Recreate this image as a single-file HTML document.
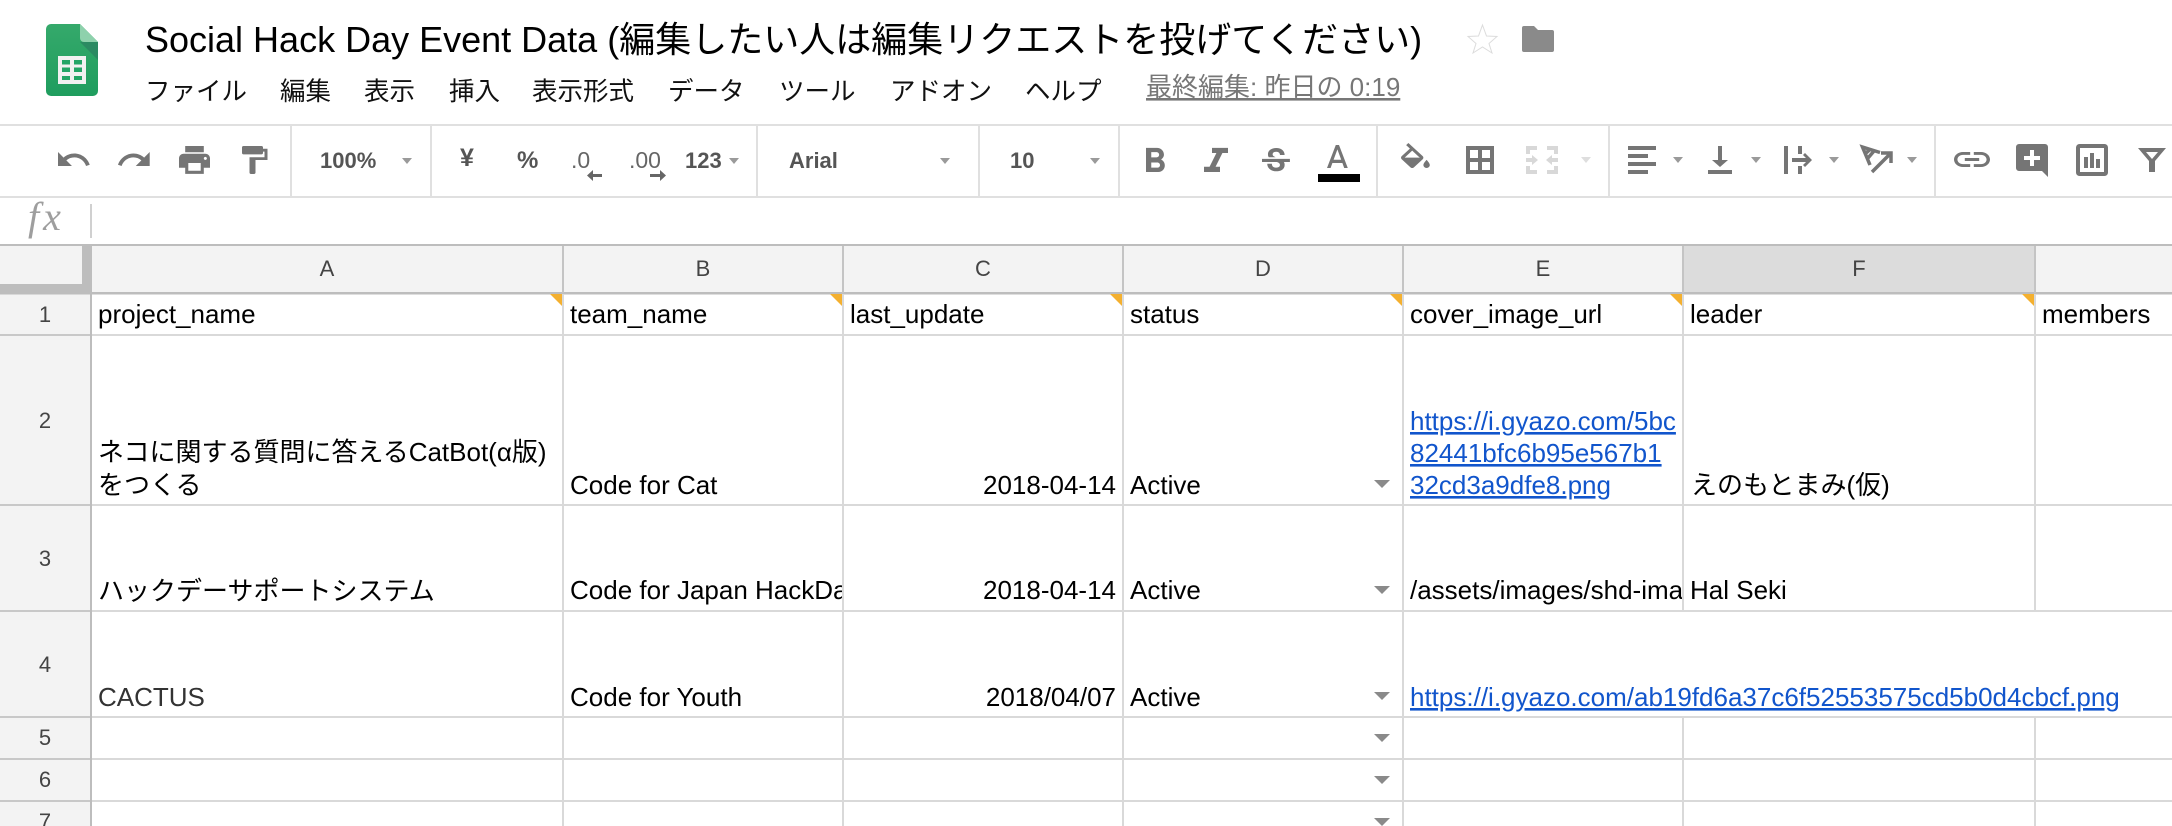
<!DOCTYPE html>
<html lang="ja"><head><meta charset="utf-8"><title>Social Hack Day Event Data</title>
<style>
html,body{margin:0;padding:0;background:#fff;width:2172px;height:826px;overflow:hidden}
svg{display:block}
text{font-family:"Liberation Sans","Noto Sans CJK JP",sans-serif;white-space:pre}
.c{font-size:26px;fill:#000}
.h{font-size:22px;fill:#444;text-anchor:middle}
.m{font-size:25.5px;fill:#111}
.t{font-size:22px;font-weight:700;fill:#555}
.l{font-size:26px;fill:#1155cc;text-decoration:underline}
.i{fill:#757575}
</style></head><body>
<svg xmlns="http://www.w3.org/2000/svg" width="2172" height="826" viewBox="0 0 2172 826">
<defs>
<clipPath id="cb"><rect x="564" y="506" width="278" height="105"/></clipPath>
<clipPath id="ce"><rect x="1404" y="506" width="278" height="105"/></clipPath>
<linearGradient id="lg" x1="0" y1="0" x2="0" y2="1"><stop offset="0" stop-color="#35a96b"/><stop offset="1" stop-color="#1f9d5e"/></linearGradient>
</defs>
<rect width="2172" height="826" fill="#fff"/>

<!-- logo -->
<path d="M51 24H80L98 42V91a5 5 0 0 1-5 5H51a5 5 0 0 1-5-5V29a5 5 0 0 1 5-5z" fill="url(#lg)"/>
<path d="M80 42L98 60V42z" fill="#2b8a62"/>
<path d="M80 24L98 42H84a4 4 0 0 1-4-4z" fill="#8ed1ac"/>
<rect x="58" y="56" width="28" height="28" fill="#f1f1f1"/>
<g fill="#23a566"><rect x="62" y="60" width="8" height="4.5"/><rect x="74" y="60" width="8" height="4.5"/><rect x="62" y="67.5" width="8" height="4.5"/><rect x="74" y="67.5" width="8" height="4.5"/><rect x="62" y="76" width="8" height="4"/><rect x="74" y="76" width="8" height="4"/></g>

<!-- title -->
<text x="145" y="52" font-size="36" fill="#000">Social Hack Day Event Data (編集したい人は編集リクエストを投げてください)</text>
<polygon points="1482.5,25 1486.5,36 1497,36.500 1489,43.500 1492,53 1482.500,47 1473,53 1476,43.500 1468,36.500 1478.500,36" fill="#fff" stroke="#dcdcdc" stroke-width="1"/>
<path d="M1522 28a2 2 0 0 1 2-2h10l4 4h14a2 2 0 0 1 2 2v18a2 2 0 0 1-2 2h-28a2 2 0 0 1-2-2z" fill="#8a8a8a"/>

<!-- menu -->
<text class="m" x="145" y="100">ファイル</text>
<text class="m" x="280" y="100">編集</text>
<text class="m" x="364" y="100">表示</text>
<text class="m" x="449" y="100">挿入</text>
<text class="m" x="532" y="100">表示形式</text>
<text class="m" x="668" y="100">データ</text>
<text class="m" x="779" y="100">ツール</text>
<text class="m" x="890" y="100">アドオン</text>
<text class="m" x="1025" y="100">ヘルプ</text>
<text x="1146" y="96" font-size="26" fill="#777" text-decoration="underline">最終編集: 昨日の 0:19</text>

<!-- toolbar frame -->
<rect x="0" y="124" width="2172" height="2" fill="#e0e0e0"/>
<rect x="0" y="196" width="2172" height="2" fill="#e0e0e0"/>
<g fill="#e0e0e0"><rect x="290" y="126" width="2" height="70"/><rect x="430" y="126" width="2" height="70"/><rect x="756" y="126" width="2" height="70"/><rect x="978" y="126" width="2" height="70"/><rect x="1118" y="126" width="2" height="70"/><rect x="1376" y="126" width="2" height="70"/><rect x="1608" y="126" width="2" height="70"/><rect x="1934" y="126" width="2" height="70"/></g>

<!-- undo / redo / print / paint -->
<path class="i" transform="translate(54.900 141.150) scale(1.550)" d="M12.5 8c-2.65 0-5.05.99-6.9 2.6L2 7v9h9l-3.62-3.62c1.39-1.16 3.16-1.88 5.12-1.88 3.54 0 6.55 2.31 7.6 5.5l2.37-.78C21.08 11.03 17.15 8 12.5 8z"/>
<path class="i" transform="translate(115.600 141.150) scale(1.550)" d="M18.4 10.6C16.55 8.99 14.15 8 11.5 8c-4.65 0-8.58 3.03-9.96 7.22L3.9 16c1.05-3.19 4.05-5.5 7.6-5.5 1.95 0 3.73.72 5.12 1.88L13 16h9V7l-3.6 3.6z"/>
<path class="i" transform="translate(175.900 141.350) scale(1.550)" d="M19 8H5c-1.66 0-3 1.34-3 3v6h4v4h12v-4h4v-6c0-1.66-1.34-3-3-3zm-3 11H8v-5h8v5zm3-7c-.55 0-1-.45-1-1s.45-1 1-1 1 .45 1 1-.45 1-1 1zm-1-9H6v4h12V3z"/>
<path class="i" transform="translate(236 143.200) scale(1.500 1.400)" d="M18 4V3c0-.55-.45-1-1-1H5c-.55 0-1 .45-1 1v4c0 .55.45 1 1 1h12c.55 0 1-.45 1-1V6h1v4H9v11c0 .55.45 1 1 1h2c.55 0 1-.45 1-1v-9h8V4h-3z"/>

<!-- zoom and number formats -->
<text class="t" x="320" y="168">100%</text>
<polygon points="402,158 412,158 407,164" fill="#9a9a9a"/>
<text x="460" y="166" font-size="25" font-weight="700" fill="#555">¥</text>
<text x="517" y="168" font-size="24" font-weight="700" fill="#555">%</text>
<text x="571" y="168" font-size="23" fill="#666">.0</text>
<path d="M587 175.500L593 170V174H602V177H593V181z" fill="#666"/>
<text x="629" y="168" font-size="23" fill="#666">.00</text>
<path d="M666 175.500L660 170V174H650V177H660V181z" fill="#666"/>
<text class="t" x="685" y="168">123</text>
<polygon points="729,158 739,158 734,164" fill="#9a9a9a"/>

<!-- font selectors -->
<text class="t" x="789" y="168">Arial</text>
<polygon points="940,158 950,158 945,164" fill="#9a9a9a"/>
<text class="t" x="1010" y="168">10</text>
<polygon points="1090,158 1100,158 1095,164" fill="#9a9a9a"/>

<!-- B I S A -->
<path class="i" transform="translate(1133.750 141) scale(1.750 1.720)" d="M15.6 10.79c.97-.67 1.65-1.77 1.65-2.79 0-2.26-1.75-4-4-4H7v14h7.04c2.09 0 3.71-1.7 3.71-3.79 0-1.52-.86-2.82-2.15-3.42zM10 6.5h3c.83 0 1.5.67 1.5 1.5s-.67 1.5-1.5 1.5h-3v-3zm3.5 9H10v-3h3.5c.83 0 1.5.67 1.5 1.5s-.67 1.5-1.5 1.5z"/>
<path class="i" transform="translate(1192 141) scale(2 1.720)" d="M10 4v3h2.21l-3.42 8H6v3h8v-3h-2.21l3.42-8H18V4z"/>
<path class="i" transform="translate(1257.350 143.350) scale(1.550)" d="M6.85 7.08C6.85 4.37 9.45 3 12.24 3c1.64 0 3 .49 3.9 1.28.77.65 1.46 1.73 1.46 3.24h-3.01c0-.31-.05-.59-.15-.85-.29-.86-1.2-1.28-2.25-1.28-1.86 0-2.34 1.02-2.34 1.7 0 .48.25.88.74 1.21.38.25.77.48 1.41.7H7.39c-.21-.34-.54-.89-.54-1.92zM21 12v-2H3v2h9.62c1.15.45 1.96.75 1.96 1.97 0 1-.81 1.67-2.28 1.67-1.54 0-2.93-.54-2.93-2.51H6.4c0 .55.08 1.13.24 1.58.81 2.29 3.29 3.3 5.67 3.3 2.27 0 5.3-.89 5.3-4.05 0-.3-.01-1.16-.48-1.96H21V12z"/>
<path class="i" transform="translate(1318.200 140.100) scale(1.600 1.640)" d="M11 3L5.5 17h2.25l1.12-3h6.25l1.12 3h2.25L13 3h-2zm-1.38 9L12 5.67 14.38 12H9.62z"/>
<rect x="1318" y="174" width="42" height="8" fill="#000"/>

<!-- fill, borders, merge -->
<path class="i" transform="translate(1396.200 143) scale(1.600 1.470)" d="M16.56 8.94L7.62 0 6.21 1.41l2.38 2.38-5.15 5.15c-.59.59-.59 1.54 0 2.12l5.5 5.5c.29.29.68.44 1.06.44s.77-.15 1.06-.44l5.5-5.5c.59-.58.59-1.53 0-2.12zM5.21 10L10 5.21 14.79 10H5.21zM19 11.5s-2 2.17-2 3.5c0 1.1.9 2 2 2s2-.9 2-2c0-1.33-2-3.5-2-3.5z"/>
<polygon class="i" points="1404,157.700 1419.600,157.700 1412,166"/>
<path d="M1468 148h24v24h-24zM1480 148v24M1468 160h24" fill="none" stroke="#757575" stroke-width="4"/>
<g fill="#d8d8d8">
<path d="M1526 146h11v4h-7v4h-4zM1547 146h11v8h-4v-4h-7zM1526 166h4v4h7v4h-11zM1554 166h4v8h-11v-4h7z"/>
<path d="M1526 158h6v-3l6 5-6 5v-3h-6zM1558 158h-6v-3l-6 5 6 5v-3h6z"/>
</g>
<polygon points="1581,157 1591,157 1586,163" fill="#dedede"/>

<!-- align -->
<g class="i"><rect x="1628" y="146" width="28" height="4"/><rect x="1628" y="154" width="20" height="4"/><rect x="1628" y="162" width="28" height="4"/><rect x="1628" y="170" width="20" height="4"/></g>
<polygon points="1673,157 1683,157 1678,163" fill="#9a9a9a"/>
<g class="i"><rect x="1708" y="170" width="24" height="4"/><path d="M1718 146h4v14h6l-8 7-8-7h6z"/></g>
<polygon points="1751,157 1761,157 1756,163" fill="#9a9a9a"/>
<g class="i"><rect x="1784" y="146" width="4" height="28"/><rect x="1798" y="146" width="4" height="8"/><rect x="1798" y="166" width="4" height="8"/><rect x="1792" y="158" width="16" height="4"/><path d="M1805 153l7 7-7 7-2-2 5-5-5-5z"/></g>
<polygon points="1829,157 1839,157 1834,163" fill="#9a9a9a"/>
<path d="M1880 152.500L1862.500 147L1870 165M1866 153l4-3.500M1868 158l6-7" fill="none" stroke="#757575" stroke-width="3.500"/>
<path d="M1872 172L1890 154M1881 153h10v10" fill="none" stroke="#757575" stroke-width="3.500"/>
<polygon points="1907,157 1917,157 1912,163" fill="#9a9a9a"/>

<!-- link, comment, chart, filter -->
<path class="i" transform="translate(1950.400 141.500) scale(1.800 1.500)" d="M3.9 12c0-1.71 1.39-3.1 3.1-3.1h4V7H7c-2.76 0-5 2.24-5 5s2.24 5 5 5h4v-1.9H7c-1.71 0-3.1-1.39-3.1-3.1zM8 13h8v-2H8v2zm9-6h-4v1.900h4c1.71 0 3.1 1.39 3.1 3.1s-1.39 3.1-3.1 3.1h-4V17h4c2.76 0 5-2.24 5-5s-2.24-5-5-5z"/>
<path class="i" d="M2019 144h26a3 3 0 0 1 3 3v30l-6-6h-23a3 3 0 0 1-3-3v-21a3 3 0 0 1 3-3z"/>
<path d="M2030 150h4v6h6v4h-6v6h-4v-6h-6v-4h6z" fill="#fff"/>
<rect x="2078" y="146" width="28" height="28" rx="1.500" fill="none" stroke="#757575" stroke-width="4"/>
<g class="i"><rect x="2084" y="157" width="4" height="11"/><rect x="2090" y="153" width="4" height="15"/><rect x="2096" y="159" width="4" height="9"/></g>
<path class="i" fill-rule="evenodd" d="M2138 148h28l-11 13v11h-6v-11zM2146 152l6 7 6-7z"/>

<!-- formula bar -->
<text x="28" y="230" font-size="40" font-style="italic" letter-spacing="4" fill="#9e9e9e" style="font-family:'Liberation Serif',serif">fx</text>
<rect x="90" y="204" width="2" height="34" fill="#d0d0d0"/>

<!-- grid headers -->
<rect x="0" y="245" width="2172" height="49" fill="#f3f3f3"/>
<rect x="1684" y="245" width="351" height="48" fill="#dcdcdc"/>
<rect x="0" y="294" width="91" height="532" fill="#f3f3f3"/>
<rect x="0" y="244" width="2172" height="2" fill="#bdbdbd"/>
<rect x="0" y="292" width="2172" height="2.500" fill="#bdbdbd"/>
<rect x="0" y="284" width="91" height="10" fill="#bdbdbd"/>
<rect x="82" y="245" width="10" height="49" fill="#bdbdbd"/>
<g fill="#c4c4c4"><rect x="562" y="246" width="2" height="47"/><rect x="842" y="246" width="2" height="47"/><rect x="1122" y="246" width="2" height="47"/><rect x="1402" y="246" width="2" height="47"/><rect x="1682" y="246" width="2" height="47"/><rect x="2034" y="246" width="2" height="47"/></g>

<!-- grid body -->
<rect x="90" y="294" width="2" height="532" fill="#bdbdbd"/>
<g fill="#d9d9d9">
<rect x="92" y="334" width="2080" height="2"/><rect x="92" y="504" width="2080" height="2"/><rect x="92" y="610" width="2080" height="2"/><rect x="92" y="716" width="2080" height="2"/><rect x="92" y="758" width="2080" height="2"/><rect x="92" y="800" width="2080" height="2"/>
<rect x="562" y="294" width="2" height="532"/><rect x="842" y="294" width="2" height="532"/><rect x="1122" y="294" width="2" height="532"/><rect x="1402" y="294" width="2" height="532"/>
<rect x="1682" y="294" width="2" height="317"/><rect x="1682" y="717" width="2" height="109"/>
<rect x="2034" y="294" width="2" height="317"/><rect x="2034" y="717" width="2" height="109"/>
</g>
<g fill="#c8c8c8"><rect x="0" y="334" width="90" height="2"/><rect x="0" y="504" width="90" height="2"/><rect x="0" y="610" width="90" height="2"/><rect x="0" y="716" width="90" height="2"/><rect x="0" y="758" width="90" height="2"/><rect x="0" y="800" width="90" height="2"/></g>

<!-- header labels -->
<text class="h" x="327" y="276">A</text><text class="h" x="703" y="276">B</text><text class="h" x="983" y="276">C</text><text class="h" x="1263" y="276">D</text><text class="h" x="1543" y="276">E</text><text class="h" x="1859" y="276">F</text>
<text class="h" x="45" y="322">1</text><text class="h" x="45" y="428">2</text><text class="h" x="45" y="566">3</text><text class="h" x="45" y="672">4</text><text class="h" x="45" y="745">5</text><text class="h" x="45" y="787">6</text><text class="h" x="45" y="829">7</text>

<!-- note markers -->
<g fill="#f4b02f"><polygon points="550,294 562,294 562,306"/><polygon points="830,294 842,294 842,306"/><polygon points="1110,294 1122,294 1122,306"/><polygon points="1390,294 1402,294 1402,306"/><polygon points="1670,294 1682,294 1682,306"/><polygon points="2022,294 2034,294 2034,306"/></g>

<!-- row 1 -->
<text class="c" x="98" y="323">project_name</text>
<text class="c" x="570" y="323">team_name</text>
<text class="c" x="850" y="323">last_update</text>
<text class="c" x="1130" y="323">status</text>
<text class="c" x="1410" y="323">cover_image_url</text>
<text class="c" x="1690" y="323">leader</text>
<text class="c" x="2042" y="323">members</text>

<!-- row 2 -->
<text class="c" x="98" y="461">ネコに関する質問に答えるCatBot(α版)</text>
<text class="c" x="98" y="494">をつくる</text>
<text class="c" x="570" y="494">Code for Cat</text>
<text class="c" x="1116" y="494" text-anchor="end">2018-04-14</text>
<text class="c" x="1130" y="494">Active</text>
<text class="l" x="1410" y="430">https://i.gyazo.com/5bc</text>
<text class="l" x="1410" y="462">82441bfc6b95e567b1</text>
<text class="l" x="1410" y="494">32cd3a9dfe8.png</text>
<text class="c" x="1691" y="494">えのもとまみ(仮)</text>

<!-- row 3 -->
<text class="c" x="98" y="600">ハックデーサポートシステム</text>
<text class="c" x="570" y="599" clip-path="url(#cb)">Code for Japan HackDay</text>
<text class="c" x="1116" y="599" text-anchor="end">2018-04-14</text>
<text class="c" x="1130" y="599">Active</text>
<text class="c" x="1410" y="599" clip-path="url(#ce)">/assets/images/shd-image.png</text>
<text class="c" x="1690" y="599">Hal Seki</text>

<!-- row 4 -->
<text class="c" x="98" y="706" style="fill:#333">CACTUS</text>
<text class="c" x="570" y="706">Code for Youth</text>
<text class="c" x="1116" y="706" text-anchor="end">2018/04/07</text>
<text class="c" x="1130" y="706">Active</text>
<text class="l" x="1410" y="706">https://i.gyazo.com/ab19fd6a37c6f52553575cd5b0d4cbcf.png</text>

<!-- dropdown arrows -->
<g fill="#8a8a8a"><polygon points="1374,480 1390,480 1382,488"/><polygon points="1374,586 1390,586 1382,594"/><polygon points="1374,692 1390,692 1382,700"/><polygon points="1374,734 1390,734 1382,742"/><polygon points="1374,776 1390,776 1382,784"/><polygon points="1374,818 1390,818 1382,826"/></g>
</svg>
</body></html>
